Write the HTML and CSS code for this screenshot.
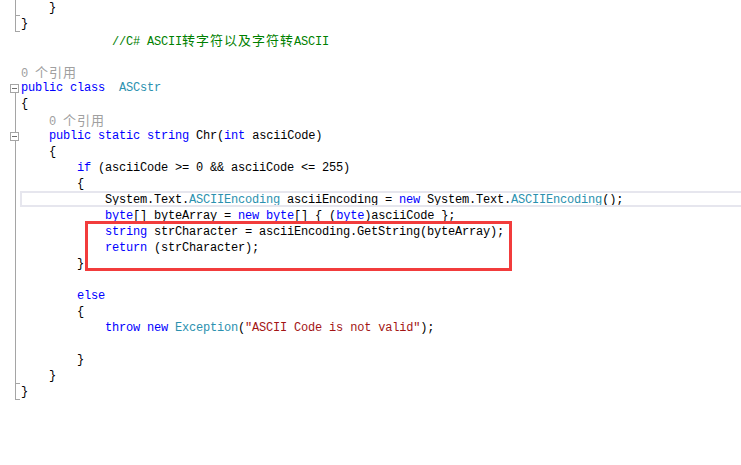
FILE: index.html
```html
<!DOCTYPE html>
<html lang="zh-CN">
<head>
    <meta charset="UTF-8" />
    <title>ASCstr.cs</title>
    <link rel="stylesheet" href="styles.css">
</head>
<body>
    <div class="editor">
        <div class="row"><span class="fold line end"></span><pre class="code">    }</pre></div>
        <div class="row"><span class="fold line end"></span><pre class="code">}</pre></div>
        <div class="row"><span class="fold"></span><pre class="code">             <span class="cm">//C# ASCII<span class="cjk">转字符以及字符转</span>ASCII</span></pre></div>
        <div class="row"><span class="fold"></span><pre class="code"></pre></div>
        <div class="row"><span class="fold"></span><pre class="code"><span class="ref">0 <span class="cjk">个引用</span></span></pre></div>
        <div class="row"><span class="fold line start"><i class="toggle"></i></span><pre class="code"><span class="kw">public</span> <span class="kw">class</span>  <span class="tp">ASCstr</span></pre></div>
        <div class="row"><span class="fold line"></span><pre class="code">{</pre></div>
        <div class="row"><span class="fold line"></span><pre class="code">    <span class="ref">0 <span class="cjk">个引用</span></span></pre></div>
        <div class="row"><span class="fold line"><i class="toggle"></i></span><pre class="code">    <span class="kw">public</span> <span class="kw">static</span> <span class="kw">string</span> Chr(<span class="kw">int</span> asciiCode)</pre></div>
        <div class="row"><span class="fold line"></span><pre class="code">    {</pre></div>
        <div class="row"><span class="fold line"></span><pre class="code">        <span class="kw">if</span> (asciiCode &gt;= 0 &amp;&amp; asciiCode &lt;= 255)</pre></div>
        <div class="row"><span class="fold line"></span><pre class="code">        {</pre></div>
        <div class="row current"><span class="fold line"></span><pre class="code">            System.Text.<span class="tp">ASCIIEncoding</span> asciiEncoding = <span class="kw">new</span> System.Text.<span class="tp">ASCIIEncoding</span>();</pre></div>
        <div class="row"><span class="fold line"></span><pre class="code">            <span class="kw">byte</span>[] byteArray = <span class="kw">new</span> <span class="kw">byte</span>[] { (<span class="kw">byte</span>)asciiCode };</pre></div>
        <div class="row"><span class="fold line"></span><pre class="code">            <span class="kw">string</span> strCharacter = asciiEncoding.GetString(byteArray);</pre></div>
        <div class="row"><span class="fold line"></span><pre class="code">            <span class="kw">return</span> (strCharacter);</pre></div>
        <div class="row"><span class="fold line"></span><pre class="code">        }</pre></div>
        <div class="row"><span class="fold line"></span><pre class="code"></pre></div>
        <div class="row"><span class="fold line"></span><pre class="code">        <span class="kw">else</span></pre></div>
        <div class="row"><span class="fold line"></span><pre class="code">        {</pre></div>
        <div class="row"><span class="fold line"></span><pre class="code">            <span class="kw">throw</span> <span class="kw">new</span> <span class="tp">Exception</span>(<span class="str">"ASCII Code is not valid"</span>);</pre></div>
        <div class="row"><span class="fold line"></span><pre class="code"></pre></div>
        <div class="row"><span class="fold line"></span><pre class="code">        }</pre></div>
        <div class="row"><span class="fold line end"></span><pre class="code">    }</pre></div>
        <div class="row"><span class="fold line end"></span><pre class="code">}</pre></div>

        <!-- annotation box drawn over the screenshot -->
        <div class="mark"></div>
    </div>
</body>
</html>
```

FILE: styles.css
```css
body {
    margin: 0;
    background-color: #ffffff;
    height: 100vh;
    overflow: hidden;
}
.editor {
    position: relative;
    display: flex;
    flex-direction: column;
    font-family: "Liberation Mono", "DejaVu Sans Mono", monospace;
    font-size: 12px;
    letter-spacing: -0.2px;
    color: #000000;
}
.row {
    display: flex;
    height: 16px;
    line-height: 16px;
    position: relative;
}
.fold {
    width: 21px;
    flex: none;
    position: relative;
}
.fold.line::before {
    content: "";
    position: absolute;
    left: 15px;
    top: 0;
    bottom: 0;
    border-left: 1px solid #a5a5a5;
}
.fold.start::before {
    top: 13px;
}
.fold.end::after {
    content: "";
    position: absolute;
    left: 15px;
    bottom: 0;
    width: 5px;
    border-top: 1px solid #a5a5a5;
}
.toggle {
    position: absolute;
    left: 10px;
    top: 4px;
    width: 7px;
    height: 7px;
    border: 1px solid #a5a5a5;
    background: #ffffff;
    z-index: 1;
}
.toggle::after {
    content: "";
    position: absolute;
    left: 1px;
    top: 3px;
    width: 5px;
    border-top: 1px solid #6e6e6e;
}
.code {
    margin: 0;
    font: inherit;
    white-space: pre;
    flex: 1;
}
.current::after {
    content: "";
    position: absolute;
    left: 20px;
    right: -4px;
    top: -1px;
    bottom: 1px;
    border: 2px solid #e6e6ee;
    border-right: none;
    pointer-events: none;
}
.kw { color: #0000ff; }
.tp { color: #2b91af; }
.str { color: #a31515; }
.cm { color: #008000; }
.ref { color: #a0a0a0; }
.cjk {
    font-family: "Noto Sans CJK SC", sans-serif;
    font-size: 13px;
    letter-spacing: 1px;
}
.mark {
    position: absolute;
    left: 85px;
    top: 221px;
    width: 427px;
    height: 50px;
    box-sizing: border-box;
    border: 3px solid #f23c3c;
}
```
